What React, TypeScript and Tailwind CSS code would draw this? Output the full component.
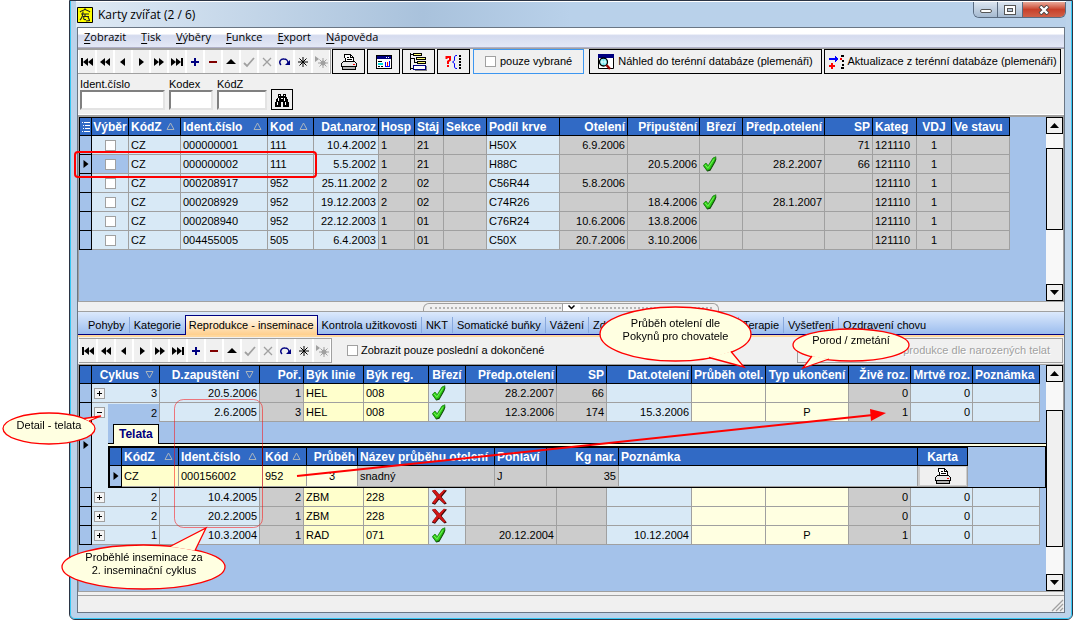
import React from "react";

type Align = "l" | "r" | "c";
const alignText: Record<Align, string> = { l: "text-left", r: "text-right", c: "text-center" };
const alignFlex: Record<Align, string> = { l: "justify-start", r: "justify-end", c: "justify-center" };

type Tone = "blue" | "gray" | "yellow" | "cream" | "sel";
const tones: Record<Tone, string> = {
  blue: "bg-[#d8e9f6]",
  gray: "bg-[#cccccc]",
  yellow: "bg-[#ffffcc]",
  cream: "bg-[#ffffe1]",
  sel: "bg-[#a4c2ea]",
};

type Column = { label: string; width: number; align: Align; tone: Tone; sort?: "up" | "down"; headAlign?: Align };

/* ---------- icons ---------- */

function Check() {
  return (
    <svg viewBox="0 0 16 16" className="block h-4 w-4">
      <path d="M3.2 8.4 L6.3 12.8 L12.8 2.4 L14.6 2.4 L13.4 6 L8.4 14.8 L5.2 15.4 L1.4 10 Z" fill="#0c3c06" />
      <path d="M1.400 9.4 L4 7 L6.2 9.8 L11 2 L14 0.8 L12.8 5 L8 13.6 L5 14.4 Z" fill="#2fd117" stroke="#1a7d10" strokeWidth="0.8" />
      <path d="M3.2 9 L5.8 12.2 L12 3.2" fill="none" stroke="#7df062" strokeWidth="0.9" />
    </svg>
  );
}

function Cross() {
  return (
    <svg viewBox="0 0 16 16" className="block h-4 w-4">
      <path d="M1 2 L4.4 1 L8.4 5.6 L13.4 1 L16 1.6 L10.6 8 L15.8 14.6 L13.6 15.6 L8.2 10.4 L4 15.8 L0.8 14.6 L5.8 8 Z" fill="#3c0505" />
      <path d="M1 1.6 L4 0.8 L8 5.4 L12.8 0.8 L14.8 1 L9.6 7.4 L15 14 L13 14.6 L7.8 9.4 L3.8 14.8 L1.2 13.6 L6 7.4 Z" fill="#d01616" />
    </svg>
  );
}

function SortMark({ dir }: { dir: "up" | "down" }) {
  return (
    <svg viewBox="0 0 9 9" className={dir === "up" ? "mr-[3px] h-[9px] w-[9px] shrink-0" : "mr-[3px] ml-[6px] h-[9px] w-[9px] shrink-0"}>
      <path d={dir === "up" ? "M1 7.5 L4.5 1 L8 7.5 Z" : "M1 1.5 L4.5 8 L8 1.5 Z"} fill="none" stroke="#a9b4bf" />
    </svg>
  );
}

const star = "M8 3 V13 M3 8 H13 M4.5 4.5 L11.5 11.5 M11.5 4.5 L4.5 11.5";
const navIcons: { name: string; draw: React.ReactNode }[] = [
  { name: "První", draw: <path d="M2 4h2v8H2z M9 4v8L4 8z M14 4v8L9 8z" /> },
  { name: "O stránku zpět", draw: <path d="M8 4v8L3 8z M13 4v8L8 8z" /> },
  { name: "Předchozí", draw: <path d="M10 4v8L5 8z" /> },
  { name: "Další", draw: <path d="M6 4v8l5-4z" /> },
  { name: "O stránku dál", draw: <path d="M3 4v8l5-4z M8 4v8l5-4z" /> },
  { name: "Poslední", draw: <path d="M2 4v8l5-4z M7 4v8l5-4z M12 4h2v8h-2z" /> },
  { name: "Přidat", draw: <path d="M7 4h2v3h3v2H9v3H7V9H4V7h3z" fill="#000080" /> },
  { name: "Smazat", draw: <path d="M4 7h8v2H4z" fill="#800000" /> },
  { name: "Upravit", draw: <path d="M3 10l5-5 5 5z" /> },
  { name: "Uložit", draw: <path d="M3 9l3 3 7-8" fill="none" stroke="#a0a0a0" strokeWidth="1.8" /> },
  { name: "Zrušit", draw: <path d="M4 4l8 8M12 4l-8 8" fill="none" stroke="#a0a0a0" strokeWidth="1.3" /> },
  {
    name: "Obnovit",
    draw: (
      <g>
        <path d="M4 11 C1 8 4 4.500 7 5 C9.500 5 11 7 11 9" fill="none" stroke="#000080" strokeWidth="1.4" />
        <path d="M13 6v5H8z" fill="#000080" />
      </g>
    ),
  },
  { name: "Záložka", draw: <path d={star} stroke="#000" fill="none" /> },
  {
    name: "Přejít na záložku",
    draw: (
      <g fill="#a0a0a0">
        <path d="M2 2l4 3-4 3z" />
        <path d="M10 4v10M5 9h10M6.500 5.500l7 7M13.500 5.500l-7 7" stroke="#a0a0a0" />
        <circle cx="10" cy="9" r="2.500" />
      </g>
    ),
  },
];

function Navigator() {
  return (
    <div className="flex border-y border-r border-[#a0a0a0] bg-white">
      {navIcons.map((n) => (
        <button key={n.name} type="button" aria-label={n.name} className="flex w-[18px] items-center justify-center border-x border-white bg-[#f0f0f0]">
          <svg viewBox="0 0 16 16" className="h-4 w-4 shrink-0">{n.draw}</svg>
        </button>
      ))}
    </div>
  );
}

function Printer() {
  return (
    <svg viewBox="0 0 16 16" className="block h-4 w-4" fill="none" stroke="#000" shapeRendering="crispEdges">
      <path d="M4.500 7.500 L3.500 0.500 H9.500 L12.500 3.500 V7.500" fill="#fff" />
      <path d="M9.500 0.500 V3.500 H12.500 M6 3.500 H8 M6 5.500 H11" />
      <path d="M0.500 9.500 L2.500 7.500 H13.500 L15.500 9.500 V12.500 H0.500 Z" fill="#e8e8e8" />
      <path d="M1.500 12.500 V15.500 H14.500 V12.500" fill="#b0b0b0" />
      <path d="M12 10.500 h2" stroke="#f00" />
    </svg>
  );
}

function FormIcon() {
  return (
    <svg viewBox="0 0 16 16" className="h-4 w-4" shapeRendering="crispEdges">
      <path d="M0.500 1.500 H15.500 V14.500 H0.500 Z" fill="#fff" stroke="#000" />
      <path d="M1 2h14v3H1z" fill="#000080" />
      <path d="M10 3h1v1h-1z M12 3h1v1h-1z" fill="#fff" />
      <path d="M2 7h4v1H2z M2 12h2v1H2z M5 12h2v1H5z" fill="#000" />
      <path d="M2 9h5v2H2z" fill="#00e0e0" />
      <path d="M9 8h1v4H9z M11 9h1v3h-1z M13 7h1v5h-1z M9 12h5v1H9z" fill="#00f" />
      <path d="M11 8h1v4h-1z" fill="#f00" />
    </svg>
  );
}

function TreeIcon() {
  return (
    <svg viewBox="0 0 17 18" className="h-[18px] w-[17px]" shapeRendering="crispEdges" stroke="#000">
      <path d="M0.500 0 V17 M1 1.500 H3 M1 5.500 H4 M4.500 5 V10 M4 9.500 H7 M1 15.500 H3" fill="none" />
      <path d="M3.500 0.500 H11.500 V2.500 H3.500 Z M6.500 4.500 H15.500 V6.500 H6.500 Z M7.500 8.500 H15.500 V10.500 H7.500 Z" fill="#ffff70" />
      <path d="M5 13h12v5H5z" fill="#808080" stroke="none" />
      <path d="M3.500 12.500 H15.500 V16.500 H3.500 Z" fill="#fff" stroke="#000080" />
    </svg>
  );
}

function QueryIcon() {
  return (
    <svg viewBox="0 0 17 16" className="h-4 w-[17px]">
      <path d="M1.500 5 V3 H5 V6 L3 7.500 V10 M3 11 V13" fill="none" stroke="#f00" strokeWidth="2" />
      <path d="M12 1.500 H10.500 L9.500 3 V6.500 L7.500 8 L9.500 9.500 V13 L10.500 14.500 H12" fill="none" stroke="#00f" />
      <path d="M15 1v15" stroke="#000" strokeWidth="2" strokeDasharray="2 1" />
    </svg>
  );
}

function LensIcon() {
  return (
    <svg viewBox="0 0 16 16" className="h-4 w-4">
      <path d="M0.500 1 H15.500 V14.500 H0.500 Z" fill="#fff" stroke="#000" />
      <path d="M0 0h16v4H0z" fill="#000080" />
      <circle cx="5.500" cy="8" r="4" fill="#70e8f0" stroke="#000" strokeWidth="1.300" />
      <path d="M4 5.500v5M7 5.500v5M2.500 8h6" stroke="#fff" strokeWidth="0.800" />
      <path d="M8.500 11 L12 15" stroke="#900" strokeWidth="2.400" />
    </svg>
  );
}

function UpdateIcon() {
  return (
    <svg viewBox="0 0 17 16" className="h-4 w-[17px]" shapeRendering="crispEdges">
      <path d="M1 4h6V2h1v1h1v1h1v2H9v1H8v1H7V6H1z" fill="#00f" />
      <path d="M3 9h2v2h2v2H5v2H3v-2H1v-2h2z" fill="#f00" />
      <path d="M13 1h3v2h-3z M14 6h2v2h-2z M14 10h2v2h-2z M13 13h3v2h-3z" fill="#000" />
      <path d="M12 4h2v2h-2z" fill="#f00" />
    </svg>
  );
}

function Binoculars() {
  return (
    <svg viewBox="0 0 16 14" className="h-[14px] w-4" shapeRendering="crispEdges">
      <path d="M4 1h3v2h2V1h3v3l1 1 2 5v4H9V9H7v5H1v-4l2-5 1-1z" fill="#000" />
      <path d="M5 2h1v1H5z M10 2h1v1h-1z M4 5h1v3H4z M11 5h-1v3h1z M3 9h1v3H3z M11 9h1v3h-1z M7 5h2v1H7z" fill="#fff" />
    </svg>
  );
}

function AppLogo() {
  return (
    <svg viewBox="0 0 16 16" className="h-4 w-4">
      <path d="M0.500 0.500 H15.500 V15.500 H0.500 Z" fill="#ff0" stroke="#000" />
      <path d="M3 5 C5 3 7 4 8 2 C9 4 11 3 13 5 M4 7 H12 M6 4.500 C6 8 5 11 3 13 M6 9.500 H12 M8 7 V9.500 M7 10 C6 12 7 13 9 12.500 M9 14 L13 13.500 M11 10 L12.500 13" fill="none" stroke="#222" strokeWidth="1.100" />
    </svg>
  );
}

/* ---------- grid parts ---------- */

function ScrollBar({ thumb }: { thumb: string }) {
  return (
    <div className="flex w-[17px] shrink-0 flex-col bg-[#f8f8f8]">
      <button type="button" aria-label="Nahoru" className="flex h-[17px] shrink-0 items-center justify-center border border-black bg-[#f0f0f0]">
        <svg viewBox="0 0 9 5" className="h-[5px] w-[9px]"><path d="M0 5 L4.500 0 L9 5 Z" /></svg>
      </button>
      <div className="flex grow flex-col">
        <div className={thumb} />
      </div>
      <button type="button" aria-label="Dolů" className="flex h-[17px] shrink-0 items-center justify-center border border-black bg-[#f0f0f0]">
        <svg viewBox="0 0 9 5" className="h-[5px] w-[9px]"><path d="M0 0 L4.500 5 L9 0 Z" /></svg>
      </button>
    </div>
  );
}

function HeadCells({ columns }: { columns: Column[] }) {
  return (
    <>
      {columns.map((c, i) => (
        <th key={i} scope="col" className="h-[19px] overflow-hidden border-y border-r border-black bg-[#316ac5] p-0 text-[12px] font-bold text-white">
          <div className={`flex items-center whitespace-nowrap pl-[2px] pr-[2px] leading-4 ${alignFlex[c.headAlign ?? c.align]}`}>
            <span className={c.sort === "up" ? "grow text-left" : ""}>{c.label}</span>
            {c.sort && <SortMark dir={c.sort} />}
          </div>
        </th>
      ))}
    </>
  );
}

function Cols({ columns }: { columns: Column[] }) {
  return (
    <colgroup>
      <col style={{ width: 13 }} />
      {columns.map((c, i) => (
        <col key={i} style={{ width: c.width }} />
      ))}
      <col />
    </colgroup>
  );
}

const indicator = "border-x border-b border-black bg-[#a4c2ea] p-0";
const indicatorHead = "h-[19px] border border-black bg-[#316ac5] p-0";
const tableCls = "w-full table-fixed border-separate border-spacing-0";

function Marker() {
  return (
    <svg viewBox="0 0 6 8" className="mx-auto block h-2 w-[6px]"><path d="M0.500 0 L5.500 4 L0.500 8 Z" /></svg>
  );
}

function Cell({ value, align, tone, tall }: { value: string; align: Align; tone: Tone; tall?: boolean }) {
  return (
    <td className={`${tall ? "h-[21px]" : "h-[19px]"} overflow-hidden whitespace-nowrap border-b border-r border-[#a0a0a0] px-[2px] py-0 leading-[18px] ${alignText[align]} ${tones[tone]}`}>
      {value === "ok" ? <span className="block h-[18px] pt-px"><Check /></span> : value === "no" ? <span className="block h-[18px] pt-px"><Cross /></span> : value}
    </td>
  );
}

/* ---------- data ---------- */

const animalCols: Column[] = [
  { label: "Výběr", width: 37, align: "c", tone: "blue" },
  { label: "KódZ", width: 52, align: "l", tone: "blue", sort: "up" },
  { label: "Ident.číslo", width: 87, align: "l", tone: "blue", sort: "up" },
  { label: "Kod", width: 46, align: "l", tone: "blue", sort: "up" },
  { label: "Dat.naroz", width: 65, align: "r", tone: "blue" },
  { label: "Hosp", width: 36, align: "l", tone: "gray" },
  { label: "Stáj", width: 29, align: "l", tone: "gray" },
  { label: "Sekce", width: 43, align: "l", tone: "gray" },
  { label: "Podíl krve", width: 73, align: "l", tone: "blue" },
  { label: "Otelení", width: 68, align: "r", tone: "gray" },
  { label: "Připuštění", width: 72, align: "r", tone: "gray" },
  { label: "Březí", width: 43, align: "l", tone: "gray", headAlign: "c" },
  { label: "Předp.otelení", width: 82, align: "r", tone: "gray" },
  { label: "SP", width: 48, align: "r", tone: "gray" },
  { label: "Kateg", width: 44, align: "l", tone: "gray" },
  { label: "VDJ", width: 35, align: "c", tone: "gray" },
  { label: "Ve stavu", width: 58, align: "l", tone: "gray" },
];

const animals: string[][] = [
  ["CZ", "000000001", "111", "10.4.2002", "1", "21", "", "H50X", "6.9.2006", "", "", "", "71", "121110", "1", ""],
  ["CZ", "000000002", "111", "5.5.2002", "1", "21", "", "H88C", "", "20.5.2006", "ok", "28.2.2007", "66", "121110", "1", ""],
  ["CZ", "000208917", "952", "25.11.2002", "2", "02", "", "C56R44", "5.8.2006", "", "", "", "", "121110", "1", ""],
  ["CZ", "000208929", "952", "19.12.2003", "2", "02", "", "C74R26", "", "18.4.2006", "ok", "28.1.2007", "", "121110", "1", ""],
  ["CZ", "000208940", "952", "22.12.2003", "1", "01", "", "C76R24", "10.6.2006", "13.8.2006", "", "", "", "121110", "1", ""],
  ["CZ", "004455005", "505", "6.4.2003", "1", "01", "", "C50X", "20.7.2006", "3.10.2006", "", "", "", "121110", "1", ""],
];

const cycleCols: Column[] = [
  { label: "Cyklus", width: 68, align: "r", tone: "blue", sort: "down" },
  { label: "D.zapuštění", width: 100, align: "r", tone: "blue", sort: "down" },
  { label: "Poř.", width: 44, align: "r", tone: "gray" },
  { label: "Býk linie", width: 60, align: "l", tone: "yellow" },
  { label: "Býk reg.", width: 65, align: "l", tone: "yellow" },
  { label: "Březí", width: 37, align: "l", tone: "blue", headAlign: "c" },
  { label: "Předp.otelení", width: 91, align: "r", tone: "gray" },
  { label: "SP", width: 50, align: "r", tone: "gray" },
  { label: "Dat.otelení", width: 85, align: "r", tone: "blue" },
  { label: "Průběh otel.", width: 74, align: "l", tone: "cream" },
  { label: "Typ ukončení", width: 83, align: "c", tone: "cream" },
  { label: "Živě roz.", width: 62, align: "r", tone: "gray" },
  { label: "Mrtvě roz.", width: 62, align: "r", tone: "blue" },
  { label: "Poznámka", width: 67, align: "l", tone: "blue" },
];

const cycles: string[][] = [
  ["3", "20.5.2006", "1", "HEL", "008", "ok", "28.2.2007", "66", "", "", "", "0", "0", ""],
  ["2", "2.6.2005", "3", "HEL", "008", "ok", "12.3.2006", "174", "15.3.2006", "", "P", "1", "0", ""],
  ["2", "10.4.2005", "2", "ZBM", "228", "no", "", "", "", "", "", "0", "0", ""],
  ["2", "20.2.2005", "1", "ZBM", "228", "no", "", "", "", "", "", "0", "0", ""],
  ["1", "10.3.2004", "1", "RAD", "071", "ok", "20.12.2004", "", "10.12.2004", "", "P", "1", "0", ""],
];

const calfCols: Column[] = [
  { label: "KódZ", width: 57, align: "l", tone: "yellow", sort: "up" },
  { label: "Ident.číslo", width: 84, align: "l", tone: "yellow", sort: "up" },
  { label: "Kód", width: 44, align: "l", tone: "yellow", sort: "up" },
  { label: "Průběh", width: 51, align: "c", tone: "cream", headAlign: "r" },
  { label: "Název průběhu otelení", width: 137, align: "l", tone: "gray" },
  { label: "Pohlaví", width: 52, align: "l", tone: "gray" },
  { label: "Kg nar.", width: 72, align: "r", tone: "gray" },
  { label: "Poznámka", width: 299, align: "l", tone: "blue" },
  { label: "Karta", width: 50, align: "c", tone: "gray" },
];
const calf = ["CZ", "000156002", "952", "3", "snadný", "J", "35", ""];

const tabs = ["Pohyby", "Kategorie", "Reprodukce - inseminace", "Kontrola užitkovosti", "NKT", "Somatické buňky", "Vážení", "Zdraví", "Terapie", "Vyšetření", "Ozdravení chovu"];

/* ---------- sections ---------- */

function TitleBar() {
  return (
    <header className="flex h-[27px] border-t border-white bg-linear-to-r from-[#dfeaf5] from-0% via-[#a9c2dc] via-35% to-[#b9d1ea] to-50%">
      <div className="flex grow items-center gap-[5px] pl-px">
        <AppLogo />
        <h1 className="font-['Open_Sans','Noto_Sans',sans-serif] text-[12px] text-black">Karty zvířat (2 / 6)</h1>
      </div>
      <div className="flex h-4 overflow-hidden rounded-b-md border-x border-b border-[#5a6b80]">
        <button type="button" aria-label="Minimalizovat" className="flex w-6 items-end justify-center border-r border-[#5a6b80] bg-linear-to-b from-[#dbe5f0] to-[#a5b9d0] pb-1">
          <span className="h-1 w-3 rounded-xs border border-[#555] bg-white" />
        </button>
        <button type="button" aria-label="Maximalizovat" className="flex w-[25px] items-center justify-center border-r border-[#5a6b80] bg-linear-to-b from-[#dbe5f0] to-[#a5b9d0]">
          <svg viewBox="0 0 12 10" className="h-[10px] w-3" shapeRendering="crispEdges">
            <path d="M0.500 0.500 H11.500 V9.500 H0.500 Z" fill="#fff" stroke="#555" />
            <path d="M3.500 3.500 H8.500 V6.500 H3.500 Z" fill="#b8c8da" stroke="#555" />
          </svg>
        </button>
        <button type="button" aria-label="Zavřít" className="flex w-[42px] items-center justify-center bg-linear-to-b from-[#e8a99a] via-[#c8402a] to-[#d06048]">
          <svg viewBox="0 0 12 10" className="h-[10px] w-3">
            <path d="M2 1 L10 9 M10 1 L2 9" stroke="#444" strokeWidth="4" />
            <path d="M2.500 1.500 L9.500 8.500 M9.500 1.500 L2.500 8.500" stroke="#fff" strokeWidth="2.400" />
          </svg>
        </button>
      </div>
    </header>
  );
}

function MenuBar() {
  const items = ["Zobrazit", "Tisk", "Výběry", "Funkce", "Export", "Nápověda"];
  return (
    <nav className="flex h-5 items-center gap-[15px] border-b border-[#b0b0c8] bg-linear-to-b from-white from-30% via-[#d5dbee] via-40% to-[#e3e8f6] pl-[6px] font-['Open_Sans','Noto_Sans',sans-serif] text-[11px] text-black">
      {items.map((m) => (
        <button key={m} type="button">
          <span className="underline underline-offset-2">{m[0]}</span>
          {m.slice(1)}
        </button>
      ))}
    </nav>
  );
}

const tool = "flex h-[25px] items-center justify-center border border-black bg-[#f0f0f0]";
const field = "h-5 border-2 border-[#e3e3e3] border-t-[#808080] border-l-[#808080] bg-white px-1 outline-none";

function Toolbar() {
  return (
    <section className="border-b border-white pb-1">
      <div className="flex border-t border-[#a0a0a0]">
        <Navigator />
        <div className="ml-px flex gap-[2px]">
          <button type="button" aria-label="Tisk" className={`${tool} w-[33px]`}><Printer /></button>
          <button type="button" aria-label="Formulář" className={`${tool} w-[33px]`}><FormIcon /></button>
          <button type="button" aria-label="Strom" className={`${tool} w-[33px]`}><TreeIcon /></button>
          <button type="button" aria-label="Dotaz" className={`${tool} w-[33px]`}><QueryIcon /></button>
        </div>
        <label className="ml-[3px] flex h-[25px] w-[111px] items-center gap-[4px] border border-[#3c96f0] bg-[#f0f0f0] pl-[11px]">
          <input type="checkbox" className="h-[11px] w-[11px] appearance-none border border-[#a0a0a0] bg-white" />
          pouze vybrané
        </label>
        <div className="ml-[5px] flex grow gap-[2px]">
          <button type="button" className={`${tool} w-[233px] gap-1`}><LensIcon />Náhled do terénní databáze (plemenáři)</button>
          <button type="button" className={`${tool} grow`}><UpdateIcon /><span className="ml-[2px] whitespace-nowrap">Aktualizace z terénní databáze (plemenáři)</span></button>
          <span className="w-px" />
        </div>
      </div>
      <div className="mt-1 flex items-end gap-1 pl-[2px]">
        <label className="flex w-[85px] flex-col leading-3">
          Ident.číslo
          <input type="text" autoFocus className={field} />
        </label>
        <label className="flex w-11 flex-col leading-3">
          Kodex
          <input type="text" className={field} />
        </label>
        <label className="flex w-[50px] flex-col leading-3">
          KódZ
          <input type="text" className={field} />
        </label>
        <button type="button" aria-label="Hledat" className="flex h-[21px] w-[22px] items-center justify-center border border-black"><Binoculars /></button>
      </div>
    </section>
  );
}

function AnimalGrid() {
  return (
    <div className="flex h-[187px] shrink-0 border-y-[1px] border-t-2 border-l border-[#a0a0a0] bg-[#a4c2ea]">
      <div className="min-w-0 grow">
        <table className={tableCls}>
          <Cols columns={animalCols} />
          <thead>
            <tr>
              <th className={indicatorHead}>
                <svg viewBox="0 0 8 10" className="mx-auto block h-[10px] w-2" stroke="#fff" shapeRendering="crispEdges">
                  <path d="M0 0.500h1M2 0.500h6M1 3.500h1M3 3.500h5M1 6.500h1M3 6.500h5M0 9.500h1M2 9.500h6" />
                </svg>
              </th>
              <HeadCells columns={animalCols} />
            </tr>
          </thead>
          <tbody>
            {animals.map((row, r) => (
              <tr key={r}>
                <td className={indicator}>{r === 1 && <Marker />}</td>
                <td className={`h-[19px] border-b border-r border-[#a0a0a0] p-0 ${r === 1 ? tones.sel : tones.blue}`}>
                  <input type="checkbox" aria-label={`Výběr ${row[1]}`} className="mx-auto block h-[11px] w-[11px] appearance-none border border-[#a0a0a0] bg-white" />
                </td>
                {row.map((v, i) => (
                  <Cell key={i} value={v} align={animalCols[i + 1].align} tone={animalCols[i + 1].tone} />
                ))}
              </tr>
            ))}
          </tbody>
        </table>
      </div>
      <ScrollBar thumb="mt-[14px] h-[82px] border border-black bg-[#f0f0f0]" />
      <div className="w-[2px] border-r border-[#a0a0a0] bg-[#f0f0f0]" />
    </div>
  );
}

function Splitter() {
  return (
    <div className="flex h-[10px] shrink-0 items-end justify-center border-b border-[#a0a0a0]">
      <div className="flex h-2 w-[296px] items-center rounded-t-md border-x border-t border-[#a0a0a0] px-[6px]">
        <div className="grow border-t-2 border-dotted border-[#b4b4b4]" />
        <button type="button" aria-label="Sbalit" className="mx-px flex h-[7px] w-[18px] items-center justify-center border-l border-[#a0a0a0] bg-white">
          <svg viewBox="0 0 7 5" className="h-[5px] w-[7px]"><path d="M0.500 0.500 L3.500 3.500 L6.500 0.500" fill="none" stroke="#000" strokeWidth="1.500" /></svg>
        </button>
        <div className="grow border-t-2 border-dotted border-[#b4b4b4]" />
      </div>
    </div>
  );
}

function Tabs() {
  return (
    <div className="shrink-0 border-b-2 border-[#ffd79c]">
      <div role="tablist" className="flex h-[23px] items-end border-b border-[#000080] bg-linear-to-b from-[#dce9fc] to-[#9cbdee] pl-[6px]">
        {tabs.map((t, i) => {
          if (i === 2)
            return (
              <button key={t} role="tab" aria-selected type="button" className="-mb-px h-5 whitespace-nowrap border-x border-t border-[#000080] bg-linear-to-b from-[#fffaf0] to-[#ffcf8c] px-[3px]">
                {t}
              </button>
            );
          return (
            <button key={t} role="tab" type="button" className={`mb-px flex h-4 items-center whitespace-nowrap px-1 ${i === 7 ? "w-[150px]" : ""} ${i === 1 || i === 10 ? "" : "border-r border-[#88a8dc]"}`}>
              {t}
            </button>
          );
        })}
      </div>
    </div>
  );
}

function CycleToolbar() {
  return (
    <div className="flex shrink-0 items-center py-px pl-px">
      <div className="flex h-[25px]"><Navigator /></div>
      <label className="ml-[15px] flex items-center gap-[3px]">
        <input type="checkbox" className="h-[11px] w-[11px] appearance-none border border-[#a0a0a0] bg-white" />
        Zobrazit pouze poslední a dokončené
      </label>
      <button type="button" disabled className="mr-px ml-auto h-[25px] w-[266px] border border-[#a0a0a0] pr-3 text-right text-[#a0a0a0] [text-shadow:1px_1px_0_white]">
        Reprodukce dle narozených telat
      </button>
    </div>
  );
}

function CycleCells({ row, open }: { row: string[]; open: boolean }) {
  return (
    <>
      <td className={`h-[19px] border-r border-[#a0a0a0] p-0 leading-[18px] ${tones.blue} ${open ? "" : "border-b"}`}>
        <div className="flex h-[18px]">
          <div className="flex w-4 items-center pl-[2px]">
            <button type="button" aria-label={open ? "Sbalit" : "Rozbalit"} className="flex h-[11px] w-[11px] items-center justify-center border border-[#a0a0a0] bg-[#f4f4f4]">
              <svg viewBox="0 0 5 5" className="h-[5px] w-[5px]" stroke="#000" shapeRendering="crispEdges">
                <path d={open ? "M0 2.500H5" : "M0 2.500H5M2.500 0V5"} />
              </svg>
            </button>
          </div>
          <span className={`grow pr-[2px] text-right ${open ? "bg-[#a4c2ea]" : ""}`}>{row[0]}</span>
        </div>
      </td>
      {row.slice(1).map((v, i) => (
        <Cell key={i} value={v} align={cycleCols[i + 1].align} tone={cycleCols[i + 1].tone} />
      ))}
    </>
  );
}

function CalfDetail() {
  return (
    <div className="flex bg-[#d8e9f6] pl-4">
      <div className="min-w-0 grow bg-[#a4c2ea]">
        <div className="flex h-[22px] items-end border-b border-black pl-[5px]">
          <div role="tab" aria-selected className="-mb-px h-5 border-x border-t border-black bg-[#ffffe1] px-[5px] text-[12px] font-bold leading-[19px] text-[#000080]">Telata</div>
        </div>
        <div className="h-[2px] bg-[#ffffe1]" />
        <div className="border border-black">
          <table className={tableCls}>
            <Cols columns={calfCols} />
            <thead>
              <tr>
                <th className={indicatorHead} />
                <HeadCells columns={calfCols} />
              </tr>
            </thead>
            <tbody>
              <tr>
                <td className={indicator}><Marker /></td>
                {calf.map((v, i) => (
                  <Cell key={i} value={v} align={calfCols[i].align} tone={calfCols[i].tone} tall />
                ))}
                <td className="h-[21px] border-b border-r border-[#a0a0a0] bg-[#cccccc] p-0">
                  <button type="button" aria-label="Karta" className="mx-auto flex h-[18px] w-[46px] items-center justify-center bg-[#f0f0f0]"><Printer /></button>
                </td>
              </tr>
            </tbody>
          </table>
        </div>
      </div>
    </div>
  );
}

function CycleGrid() {
  return (
    <div className="flex grow border-y border-l border-[#a0a0a0] bg-[#a4c2ea]">
      <div className="min-w-0 grow">
        <table className={tableCls}>
          <Cols columns={cycleCols} />
          <thead>
            <tr>
              <th className={indicatorHead} />
              <HeadCells columns={cycleCols} />
            </tr>
          </thead>
          <tbody>
            {cycles.map((row, r) => (
              <React.Fragment key={r}>
                <tr>
                  <td rowSpan={r === 1 ? 2 : 1} className={indicator}>{r === 1 && <Marker />}</td>
                  <CycleCells row={row} open={r === 1} />
                </tr>
                {r === 1 && (
                  <tr>
                    <td colSpan={15} className="p-0"><CalfDetail /></td>
                  </tr>
                )}
              </React.Fragment>
            ))}
          </tbody>
        </table>
      </div>
      <ScrollBar thumb="mt-7 h-[137px] border border-black bg-[#f0f0f0]" />
      <div className="w-[2px] border-r border-[#a0a0a0] bg-[#f0f0f0]" />
    </div>
  );
}

function StatusBar() {
  return (
    <footer className="shrink-0 pt-[3px]">
      <div className="flex h-[17px] items-end justify-end border-t border-[#a0a0a0]">
        <svg viewBox="0 0 13 13" className="h-[13px] w-[13px]" stroke="#a0a0a0" strokeWidth="1.300">
          <path d="M1 12 L12 1 M5 12 L12 5 M9 12 L12 9" />
        </svg>
      </div>
    </footer>
  );
}

/* Notes drawn over the window */
function Annotations() {
  const note = "absolute text-center leading-[13px] whitespace-nowrap";
  return (
    <div className="pointer-events-none absolute top-0 left-0 h-[620px] w-[1073px]">
      <svg viewBox="0 0 1073 620" className="absolute inset-0 h-full w-full" fill="none">
        <rect x="75" y="152" width="241" height="25" rx="3" stroke="#f00" strokeWidth="2" />
        <rect x="174.500" y="399.500" width="88" height="128" rx="9" stroke="#f00" strokeOpacity="0.500" />
        <path d="M297 476 L873 415" stroke="#f00" strokeWidth="2" />
        <path d="M886 413 L870 409 L871 421 Z" fill="#f00" />
        <g fill="#ffffe1" stroke="#f00" strokeWidth="1.300">
          <ellipse cx="675.500" cy="334" rx="75.500" ry="27" />
          <path d="M731 351.500 L744 367 L709 357.500" />
          <ellipse cx="851" cy="345" rx="58" ry="16" />
          <path d="M812 356 L803 368 L829 359" />
          <ellipse cx="49" cy="428.500" rx="46" ry="15.500" />
          <path d="M84 418.500 L101 416 L89 421" />
          <ellipse cx="143.500" cy="567" rx="81.500" ry="22" />
          <path d="M170 546.500 L206 528 L195 550.500" />
        </g>
      </svg>
      <p className={`${note} top-[317px] left-[600px] w-[151px]`}>Průběh otelení dle<br />Pokynů pro chovatele</p>
      <p className={`${note} top-[334px] left-[793px] w-[116px]`}>Porod / zmetání</p>
      <p className={`${note} top-[419px] left-[3px] w-[92px]`}>Detail - telata</p>
      <p className={`${note} top-[551px] left-[62px] w-[164px]`}>Proběhlé inseminace za<br />2. inseminační cyklus</p>
    </div>
  );
}

export default function App() {
  return (
    <div className="relative flex min-h-screen bg-white pl-[69px] font-['Liberation_Sans',Arial,sans-serif] text-[11px] text-black">
      <main className="flex min-w-0 grow flex-col rounded-b-md border border-[#2b3444] bg-[#bcd3ea]">
        <div className="flex grow flex-col rounded-b-[5px] border-x border-b border-[#35c8f5]">
          <div className="-mb-px px-[5px]"><TitleBar /></div>
          <div className="flex grow flex-col pr-[6px] pb-[5px] pl-[6px]">
            <div className="flex grow flex-col border border-[#6a7684] bg-[#f0f0f0]">
              <MenuBar />
              <Toolbar />
              <AnimalGrid />
              <Splitter />
              <Tabs />
              <CycleToolbar />
              <CycleGrid />
              <StatusBar />
            </div>
          </div>
        </div>
      </main>
      <Annotations />
    </div>
  );
}
